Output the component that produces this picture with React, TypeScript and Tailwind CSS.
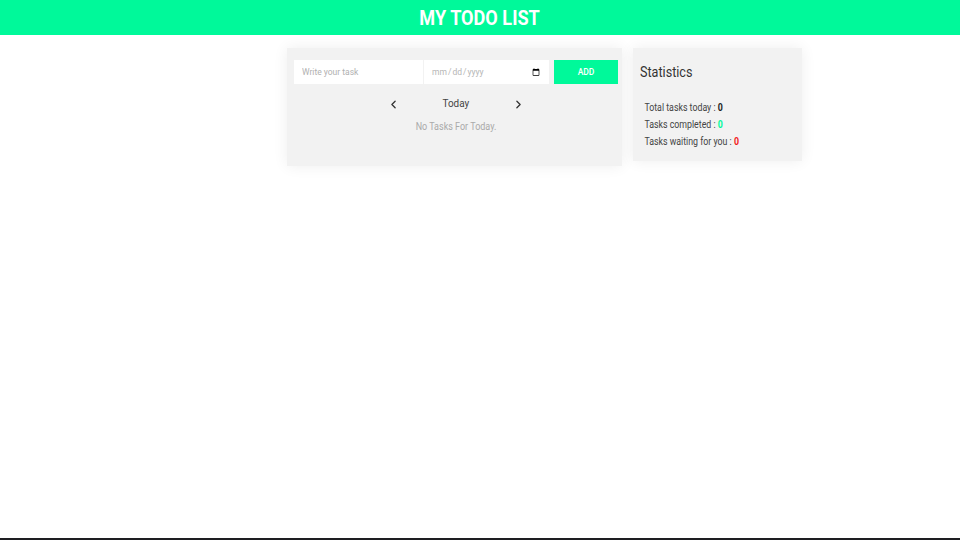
import { ChevronLeft, ChevronRight } from 'lucide-react';

export default function App() {
  return (
    <div className="flex min-h-screen flex-col bg-white font-['Roboto','Liberation_Sans',sans-serif]">
      <header className="flex h-[35px] items-center justify-center bg-[#00f99a]">
        <h1 className="inline-block scale-x-[0.905] text-[20px] font-bold text-white">MY TODO LIST</h1>
      </header>

      <main className="flex flex-1 items-start gap-[11px] pl-[287px] pt-[13px]">
        {/* todo card */}
        <section className="w-[335px] bg-[#f2f2f2] pb-[32px] pl-[7px] pr-[4px] pt-[12px] shadow-[0_0_14px_rgba(0,0,0,0.07)]">
          <div className="flex h-[24px] items-stretch">
            <input
              type="text"
              placeholder="Write your task"
              className="w-[129px] shrink-0 bg-white px-[8px] text-[8.5px] text-[#555] outline-none placeholder:text-[#b0b0b0]"
            />
            <input
              type="date"
              className="ml-px w-[125px] shrink-0 bg-white px-[7px] text-[8.5px] text-[#b5b5b5] outline-none"
            />
            <button className="ml-[5px] w-[64px] shrink-0 bg-[#00f99a] text-[8.5px] font-medium text-white">ADD</button>
          </div>

          <div className="mt-[12px] flex items-center justify-center">
            <ChevronLeft className="h-[13px] w-[13px] text-[#333]" strokeWidth={2.4} />
            <span className="mx-[41px] inline-block scale-x-[0.9] text-[11px] text-[#444]">Today</span>
            <ChevronRight className="h-[13px] w-[13px] text-[#333]" strokeWidth={2.4} />
          </div>
          <p className="mt-[6px] scale-x-[0.9] text-center text-[10px] text-[#aaa]">No Tasks For Today.</p>
        </section>

        {/* statistics card */}
        <section className="w-[169px] bg-[#f2f2f2] px-[7px] pb-[11px] pt-[14px] shadow-[0_0_14px_rgba(0,0,0,0.07)]">
          <h2 className="origin-left scale-x-[0.9] text-[14px] text-[#333]">Statistics</h2>
          <ul className="mt-[16px] origin-left scale-x-[0.88] pl-[5px] text-[10px] leading-[17px] text-[#444]">
            <li>
              Total tasks today : <b className="text-[#222]">0</b>
            </li>
            <li>
              Tasks completed : <b className="text-[#00f99a]">0</b>
            </li>
            <li>
              Tasks waiting for you : <b className="text-[#f21b1b]">0</b>
            </li>
          </ul>
        </section>
      </main>

      <div className="h-[2px] bg-[#1e1e22]" />
    </div>
  );
}
